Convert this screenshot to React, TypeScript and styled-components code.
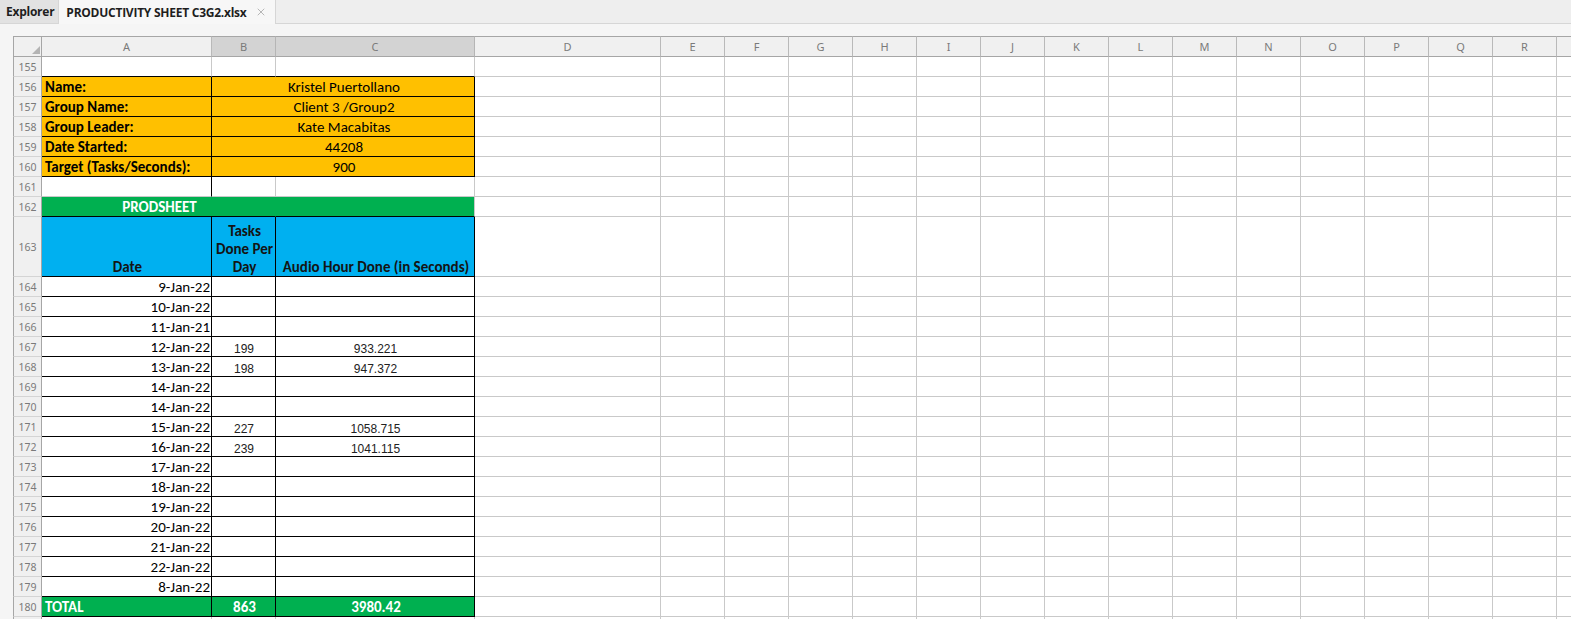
import React from 'react';
import styled, { createGlobalStyle, css } from 'styled-components';
import { X } from 'lucide-react';

const GRID = '#c9c9c9';
const HEAD_LINE = '#a6a6a6';
const BLACK = '#000';
const YELLOW = '#ffc000';
const GREEN = '#00b050';
const BLUE = '#00b0f0';
const COLS = '29px 170px 64px 199px 186px repeat(14, 64px) 64px';
const CELL_FONT = 'Carlito, Lato, "Liberation Sans", sans-serif';
const NUM_FONT = '"Liberation Sans", Arial, sans-serif';
const UI_FONT = '"Noto Sans", "Open Sans", sans-serif';

const GlobalStyle = createGlobalStyle`
  html, body { margin: 0; padding: 0; overflow: hidden; background: #f5f5f5; }
  body { font-family: ${UI_FONT}; }
  * { box-sizing: border-box; }
`;

const Page = styled.div`
  width: 1571px;
  height: 619px;
  overflow: hidden;
  display: flex;
  flex-direction: column;
`;

const TabBar = styled.div`
  height: 24px;
  display: flex;
  align-items: stretch;
  background: #eeeeee;
  border-bottom: 1px solid #d6d6d6;
`;

const Tab = styled.div<{ $active?: boolean }>`
  display: flex;
  align-items: center;
  gap: 9px;
  padding: 0 ${(p) => (p.$active ? '8px' : '4px')} 0 ${(p) => (p.$active ? '7px' : '6px')};
  font-family: "Open Sans", sans-serif;
  font-weight: 700;
  font-size: 12px;
  letter-spacing: -0.25px;
  color: #1e1e1e;
  ${(p) =>
    p.$active
      ? css`
          background: #f7f7f7;
          border-left: 1px solid #d6d6d6;
          border-right: 1px solid #d6d6d6;
          margin-bottom: -1px;
          height: 24px;
        `
      : css`
          background: #e2e2e2;
        `}
`;

const CloseIcon = styled(X)`
  color: #8a8a8a;
`;

const Frame = styled.div`
  flex: 1;
  padding: 12px 0 0 13px;
  background: #f5f5f5;
  overflow: hidden;
`;

const Sheet = styled.div`
  display: flex;
  flex-direction: column;
  width: 1600px;
`;

const Row = styled.div<{ $h: number }>`
  display: grid;
  grid-template-columns: ${COLS};
  height: ${(p) => p.$h}px;
`;

const Corner = styled.div`
  background: #f0f0f0;
  border: 1px solid ${HEAD_LINE};
  display: flex;
  align-items: flex-end;
  justify-content: flex-end;
  padding: 0 1px 2px 0;
`;

const ColHead = styled.div<{ $sel?: boolean }>`
  background: ${(p) => (p.$sel ? '#d3d3d3' : '#f0f0f0')};
  border-top: 1px solid ${HEAD_LINE};
  border-bottom: 1px solid ${HEAD_LINE};
  border-right: 1px solid ${(p) => (p.$sel ? '#b5b5b5' : '#b9b9b9')};
  display: flex;
  align-items: center;
  justify-content: center;
  font-family: ${UI_FONT};
  font-size: 11px;
  color: #7a7a7a;
  line-height: 1;
`;

const RowHead = styled.div`
  background: #f0f0f0;
  border-left: 1px solid ${HEAD_LINE};
  border-right: 1px solid ${HEAD_LINE};
  border-bottom: 1px solid #d4d4d4;
  display: flex;
  align-items: center;
  justify-content: center;
  font-family: ${UI_FONT};
  font-size: 10.5px;
  color: #7a7a7a;
  padding-top: 1px;
`;

type Align = 'left' | 'center' | 'right';

const Cell = styled.div<{
  $bg?: string;
  $rb?: string;
  $bb?: string;
  $align?: Align;
  $bold?: boolean;
  $num?: boolean;
  $color?: string;
  $span?: number;
}>`
  grid-column: span ${(p) => p.$span ?? 1};
  background: ${(p) => p.$bg ?? '#fff'};
  border-right: 1px solid ${(p) => p.$rb ?? GRID};
  border-bottom: 1px solid ${(p) => p.$bb ?? GRID};
  display: flex;
  align-items: flex-end;
  justify-content: ${(p) =>
    p.$align === 'right' ? 'flex-end' : p.$align === 'center' ? 'center' : 'flex-start'};
  text-align: ${(p) => p.$align ?? 'left'};
  padding: ${(p) => (p.$num ? '0 2px 0 3px' : '0 1px 0 3px')};
  white-space: nowrap;
  overflow: hidden;
  color: ${(p) => p.$color ?? '#000'};
  font-weight: ${(p) => (p.$bold ? 700 : 400)};
  ${(p) =>
    p.$num
      ? css`
          font-family: ${NUM_FONT};
          font-size: 12px;
          line-height: 14px;
          color: #222;
        `
      : css`
          font-family: ${CELL_FONT};
          font-size: 15px;
          line-height: 17px;
        `}
`;

const HeadText = styled.span`
  white-space: normal;
  line-height: 18px;
  display: block;
  width: 100%;
  text-align: center;
`;

const CornerMark = () => (
  <svg width="8" height="8" viewBox="0 0 8 8">
    <polygon points="8,0 8,8 0,8" fill="#b4b4b4" />
  </svg>
);

const letters = 'ABCDEFGHIJKLMNOPQR'.split('');

const Blanks = () => (
  <>
    {Array.from({ length: 16 }).map((_, i) => (
      <Cell key={i} />
    ))}
  </>
);

const info: [string, string][] = [
  ['Name:', 'Kristel Puertollano'],
  ['Group Name:', 'Client 3 /Group2'],
  ['Group Leader:', 'Kate Macabitas'],
  ['Date Started:', '44208'],
  ['Target (Tasks/Seconds):', '900'],
];

const days: [string, string, string][] = [
  ['9-Jan-22', '', ''],
  ['10-Jan-22', '', ''],
  ['11-Jan-21', '', ''],
  ['12-Jan-22', '199', '933.221'],
  ['13-Jan-22', '198', '947.372'],
  ['14-Jan-22', '', ''],
  ['14-Jan-22', '', ''],
  ['15-Jan-22', '227', '1058.715'],
  ['16-Jan-22', '239', '1041.115'],
  ['17-Jan-22', '', ''],
  ['18-Jan-22', '', ''],
  ['19-Jan-22', '', ''],
  ['20-Jan-22', '', ''],
  ['21-Jan-22', '', ''],
  ['22-Jan-22', '', ''],
  ['8-Jan-22', '', ''],
];

export default function App() {
  return (
    <>
      <GlobalStyle />
      <Page>
        <TabBar>
          <Tab>Explorer</Tab>
          <Tab $active>
            PRODUCTIVITY SHEET C3G2.xlsx
            <CloseIcon size={12} strokeWidth={1.2} />
          </Tab>
        </TabBar>
        <Frame>
          <Sheet>
            <Row $h={21}>
              <Corner>
                <CornerMark />
              </Corner>
              {letters.map((l) => (
                <ColHead key={l} $sel={l === 'B' || l === 'C'}>
                  {l}
                </ColHead>
              ))}
              <ColHead />
            </Row>

            <Row $h={20}>
              <RowHead>155</RowHead>
              <Cell $bb={BLACK} />
              <Cell $bb={BLACK} />
              <Cell $bb={BLACK} />
              <Blanks />
            </Row>

            {info.map(([k, v], i) => (
              <Row $h={20} key={k}>
                <RowHead>{156 + i}</RowHead>
                <Cell $bg={YELLOW} $rb={BLACK} $bb={BLACK} $bold>
                  {k}
                </Cell>
                <Cell $bg={YELLOW} $rb={BLACK} $bb={BLACK} $span={2} $align="center">
                  {v}
                </Cell>
                <Blanks />
              </Row>
            ))}

            <Row $h={20}>
              <RowHead>161</RowHead>
              <Cell $rb={BLACK} />
              <Cell />
              <Cell />
              <Blanks />
            </Row>

            <Row $h={20}>
              <RowHead>162</RowHead>
              <Cell $bg={GREEN} $rb={GREEN} $bb={BLACK} $span={2} $align="center" $bold $color="#fff">
                PRODSHEET
              </Cell>
              <Cell $bg={GREEN} $bb={BLACK} />
              <Blanks />
            </Row>

            <Row $h={60}>
              <RowHead>163</RowHead>
              <Cell $bg={BLUE} $rb={BLACK} $bb={BLACK} $align="center" $bold $color="#141414">
                Date
              </Cell>
              <Cell $bg={BLUE} $rb={BLACK} $bb={BLACK} $align="center" $bold $color="#141414">
                <HeadText>
                  Tasks
                  <br />
                  Done Per
                  <br />
                  Day
                </HeadText>
              </Cell>
              <Cell $bg={BLUE} $rb={BLACK} $bb={BLACK} $align="center" $bold $color="#141414">
                Audio Hour Done (in Seconds)
              </Cell>
              <Blanks />
            </Row>

            {days.map(([d, t, s], i) => (
              <Row $h={20} key={i}>
                <RowHead>{164 + i}</RowHead>
                <Cell $rb={BLACK} $bb={BLACK} $align="right">
                  {d}
                </Cell>
                <Cell $rb={BLACK} $bb={BLACK} $align="center" $num>
                  {t}
                </Cell>
                <Cell $rb={BLACK} $bb={BLACK} $align="center" $num>
                  {s}
                </Cell>
                <Blanks />
              </Row>
            ))}

            <Row $h={20}>
              <RowHead>180</RowHead>
              <Cell $bg={GREEN} $rb={BLACK} $bb={BLACK} $bold $color="#fff">
                TOTAL
              </Cell>
              <Cell $bg={GREEN} $rb={BLACK} $bb={BLACK} $bold $align="center" $color="#fff">
                863
              </Cell>
              <Cell $bg={GREEN} $rb={BLACK} $bb={BLACK} $bold $align="center" $color="#fff">
                3980.42
              </Cell>
              <Blanks />
            </Row>

            <Row $h={20}>
              <RowHead />
              <Cell />
              <Cell />
              <Cell />
              <Blanks />
            </Row>
          </Sheet>
        </Frame>
      </Page>
    </>
  );
}
